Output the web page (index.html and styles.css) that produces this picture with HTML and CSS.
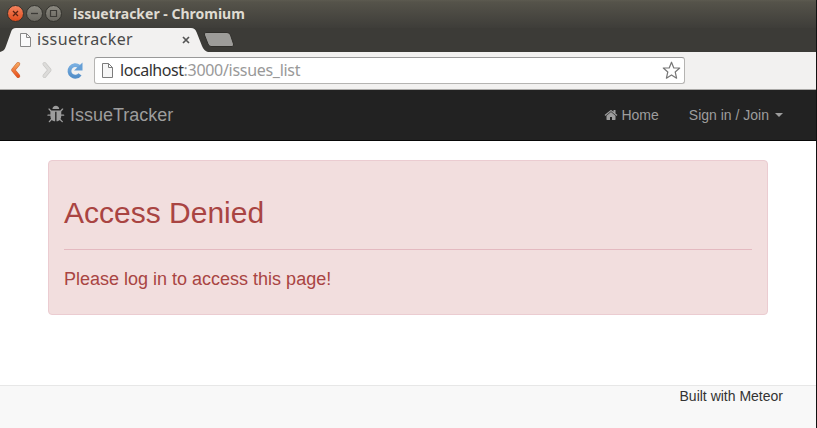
FILE: index.html
```html
<!DOCTYPE html>
<html lang="en">
<head>
<meta charset="utf-8">
<title>issuetracker</title>
<link rel="stylesheet" href="styles.css">
</head>
<body>
<div class="window">
  <header class="titlebar">
    <svg class="controls" width="56" height="18" viewBox="0 0 56 18">
      <defs>
        <linearGradient id="close" x1="0" y1="0" x2="0" y2="1"><stop offset="0" stop-color="#f58560"/><stop offset="1" stop-color="#df4a1b"/></linearGradient>
        <linearGradient id="grey" x1="0" y1="0" x2="0" y2="1"><stop offset="0" stop-color="#8c8a81"/><stop offset="1" stop-color="#696760"/></linearGradient>
      </defs>
      <g stroke="#33322d">
        <circle cx="9.500" cy="8.500" r="8" fill="url(#close)"/>
        <circle cx="28.500" cy="8.500" r="8" fill="url(#grey)"/>
        <circle cx="47.500" cy="8.500" r="8" fill="url(#grey)"/>
      </g>
      <g fill="none" stroke="#3c3b37" stroke-width="1.3">
        <path d="M7 6l5 5M12 6l-5 5" stroke="#5a2312"/>
        <path d="M25 8.500h7"/>
        <path d="M44.500 5.500h6v6h-6z" stroke-width="1.200"/>
      </g>
    </svg>
    <span class="window-title">issuetracker - Chromium</span>
  </header>

  <div class="tabstrip">
    <div class="tab">
      <svg class="tab-shape" width="213" height="24" viewBox="0 0 213 24"><path d="M0 24C4 23 5 21 6 18L11 4Q12 0 16 0H191Q195 0 196.500 4L202 18Q204 23 208 24Z" fill="#f2f1f0"/></svg>
      <svg class="page-icon" width="12" height="14" viewBox="0 0 12 14"><path d="M.5.5h6l4 4v9H.5zM6.500.5v4h4" fill="#fafafa" stroke="#888"/></svg>
      <span class="tab-title">issuetracker</span>
      <svg class="tab-close" width="8" height="8" viewBox="0 0 8 8"><path d="M1 1l6 6M7 1l-6 6" stroke="#555" stroke-width="1.700"/></svg>
    </div>
    <svg class="new-tab" width="32" height="15" viewBox="0 0 32 15"><path d="M3 .5H24Q26.500.5 27.500 3L30.500 12Q31 14.500 29 14.500H8Q6 14.500 5 12L1.500 3Q.5.5 3 .5Z" fill="#9d9c99" stroke="#302f2b"/></svg>
  </div>

  <div class="toolbar">
    <svg class="nav-icons" width="94" height="20" viewBox="0 0 94 20">
      <defs>
        <linearGradient id="back" x1="0" y1="0" x2="0" y2="1"><stop offset="0" stop-color="#f5a45c"/><stop offset="1" stop-color="#e95420"/></linearGradient>
        <linearGradient id="reload" x1="0" y1="0" x2="0" y2="1"><stop offset="0" stop-color="#78aee0"/><stop offset="1" stop-color="#538fc9"/></linearGradient>
      </defs>
      <g fill="none" stroke-linecap="round" stroke-linejoin="round">
        <path d="M18.200 4l-5 6 5 6" stroke="#c56a3e" stroke-width="4"/>
        <path d="M18.200 4l-5 6 5 6" stroke="url(#back)" stroke-width="3"/>
        <path d="M44.500 4l5 6-5 6" stroke="#c9c8c6" stroke-width="4"/>
        <path d="M44.500 4l5 6-5 6" stroke="#dcdbd9" stroke-width="2.700"/>
      </g>
      <path d="M80 14.300A5.800 5.800 0 1 1 79 6.500" fill="none" stroke="url(#reload)" stroke-width="3.800"/>
      <path d="M82.500 2.500v8h-8.500z" fill="#659fd6"/>
    </svg>
    <div class="address">
      <svg class="url-page" width="11" height="15" viewBox="0 0 11 15"><path d="M.5.5h6l4 4v10H.5zM6.500.5v4h4" fill="#f6f6f6" stroke="#7b7b7b"/></svg>
      <span class="url"><span class="host">localhost</span>:3000/issues_list</span>
      <svg class="star" width="19" height="19" viewBox="0 0 19 19"><path d="M9.500 1.200L11.800 7H17.700L13.200 11L14.600 17.200L9.500 13.900L4.400 17.200L5.800 11L1.300 7H7.200Z" fill="#fff" stroke="#777" stroke-width="1.200" stroke-linejoin="round"/></svg>
    </div>
  </div>

  <nav class="navbar">
    <a class="brand">
      <svg width="19" height="19" viewBox="0 0 1792 1792" fill="currentColor"><path d="M1632 960q0 26-19 45t-45 19h-224q0 171-67 290l208 209q19 19 19 45t-19 45q-18 19-45 19t-45-19l-198-197q-5 5-15 13t-42 28.500-65 36.500-82 29-97 13v-896h-128v896q-51 0-101.500-13.500t-87-33-66-39-43.500-32.500l-15-14-183 207q-20 21-48 21-24 0-43-16-19-18-20.500-44.500t15.500-46.500l202-227q-58-114-58-274h-224q-26 0-45-19t-19-45 19-45 45-19h224v-294l-173-173q-19-19-19-45t19-45 45-19 45 19l173 173h844l173-173q19-19 45-19t45 19 19 45-19 45l-173 173v294h224q26 0 45 19t19 45zm-480-576h-640q0-133 93.500-226.500t226.500-93.500 226.500 93.500 93.500 226.500z"/></svg>
      <span>IssueTracker</span>
    </a>
    <div class="links">
      <a class="home"><svg width="14" height="14" viewBox="0 0 1792 1792" fill="currentColor"><path d="M1472 992v480q0 26-19 45t-45 19h-384v-384h-256v384h-384q-26 0-45-19t-19-45v-480q0-1 .5-3t.5-3l575-474 575 474q1 2 1 6zm223-69l-62 74q-8 9-21 11h-3q-13 0-21-7l-692-577-692 577q-12 8-24 7-13-2-21-11l-62-74q-8-10-7-23.500t11-21.500l719-599q32-26 76-26t76 26l244 204v-195q0-14 9-23t23-9h192q14 0 23 9t9 23v408l219 182q10 8 11 21.500t-7 23.500z"/></svg><span>Home</span></a>
      <a class="signin">Sign in / Join<b class="caret"></b></a>
    </div>
  </nav>

  <main>
    <section class="alert">
      <h2>Access Denied</h2>
      <hr>
      <p>Please log in to access this page!</p>
    </section>
  </main>

  <footer>Built with Meteor</footer>
</div>
</body>
</html>
```
FILE: styles.css
```css
* { box-sizing: border-box; }
body {
  margin: 0;
  background: #fff;
  font: 14px/20px "Liberation Sans", Arial, sans-serif;
  color: #333;
  overflow: hidden;
}
svg { display: block; flex: none; }
.window {
  display: flex;
  flex-direction: column;
  height: 428px;
  border-right: 1px solid #111;
}
.titlebar {
  display: flex;
  align-items: center;
  flex: none;
  height: 28px;
  padding: 0 0 1px 6px;
  background: linear-gradient(#5c5a50 0, #55534a 2px, #3e3d39 28px);
}
.controls { margin-top: 1px; }
.window-title {
  margin-left: 11px;
  font: bold 14px/20px "Noto Sans", sans-serif;
  color: #dfdbd2;
  white-space: nowrap;
}
.tabstrip {
  display: flex;
  flex: none;
  height: 24px;
  background: #3c3b37;
}
.tab {
  position: relative;
  display: flex;
  align-items: center;
  width: 203px;
  height: 24px;
  padding-left: 20px;
}
.tab-shape { position: absolute; left: 0; top: 0; }
.page-icon, .tab-title, .tab-close { position: relative; }
.tab-title {
  width: 97px;
  margin-left: 5px;
  font: 16px/24px "Noto Sans", sans-serif;
  letter-spacing: 0.4px;
  color: #4a4a4a;
  white-space: nowrap;
}
.tab-title { line-height: 22px; padding-bottom: 2px; }
.tab-close { margin-left: 48px; }
.new-tab { margin-top: 4px; }
.toolbar {
  display: flex;
  align-items: center;
  flex: none;
  height: 38px;
  padding-bottom: 1px;
  background: #f2f1f0;
  border-bottom: 1px solid #aaa9a7;
}
.nav-icons { overflow: visible; }
.address {
  display: flex;
  align-items: center;
  width: 591px;
  height: 27px;
  padding: 0 3px 0 7px;
  background: #fff;
  border: 1px solid #b5b4b2;
  border-top-color: #999;
  border-radius: 3px;
}
.url {
  flex: 1;
  margin-left: 7px;
  font: 16px/24px "Noto Sans", sans-serif;
  letter-spacing: -0.3px;
  color: #999;
  white-space: nowrap;
}
.host { color: #333; letter-spacing: -0.45px; }
.navbar {
  display: flex;
  align-items: center;
  justify-content: space-between;
  flex: none;
  height: 51px;
  padding: 0 33px 0 47px;
  background: #222;
  border-bottom: 1px solid #080808;
  color: #9d9d9d;
}
.brand { display: flex; align-items: center; font-size: 18px; }
.brand svg { margin-top: -1px; }
.brand span { margin-left: 4px; }
.links { display: flex; gap: 30px; }
.home, .signin { display: flex; align-items: center; }
.home span { margin-left: 3px; }
.caret {
  margin-left: 6px;
  border-top: 4px solid currentColor;
  border-left: 4px solid transparent;
  border-right: 4px solid transparent;
}
main { flex: none; height: 244px; padding: 19px 48px 0; }
.alert {
  height: 155px;
  padding: 15px;
  background: #f2dede;
  border: 1px solid #ebccd1;
  border-radius: 4px;
  color: #a94442;
}
h2 { margin: 20px 0 20px; font-size: 30px; line-height: 33px; font-weight: 500; }
hr { margin: 0 0 19px; border: 0; border-top: 1px solid #e4b9c0; }
.alert p { margin: 0; font-size: 18px; line-height: 20px; }
footer {
  flex: 1;
  padding-right: 33px;
  background: #f8f8f8;
  border-top: 1px solid #e7e7e7;
  text-align: right;
}
```
